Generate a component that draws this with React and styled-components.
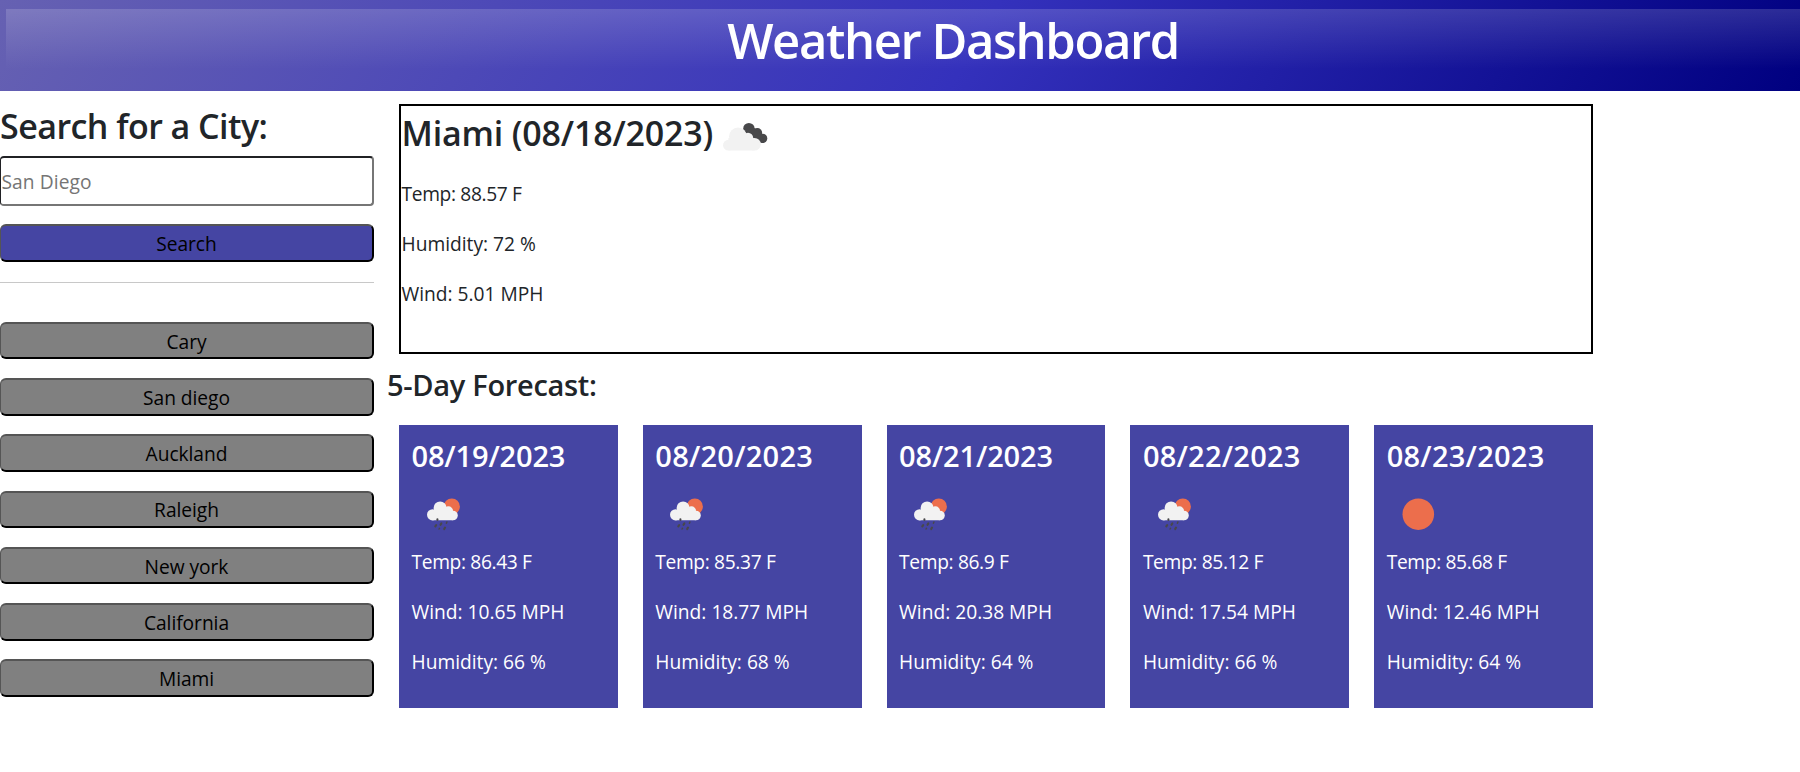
import React from "react";
import styled, { createGlobalStyle } from "styled-components";

const Global = createGlobalStyle`
  *, *::before, *::after { box-sizing: border-box; }
  body {
    margin: 0;
    background: #fff;
    color: #212529;
    font: 400 19.2px/30px "Open Sans", "Noto Sans", sans-serif;
    overflow: hidden;
  }
  h1, h2, h3, h4, p { margin: 0; }
`;

const Header = styled.header`
  height: 91px;
  padding: 9px 0 0 6px;
  background: linear-gradient(120deg, #6661b2 0%, #3431bc 54%, #000080 100%);
`;

const Gloss = styled.div`
  height: 60px;
  background: linear-gradient(to bottom, rgba(255, 255, 255, 0.16), rgba(255, 255, 255, 0));
`;

const Title = styled.h1`
  padding-left: 100px;
  text-align: center;
  color: #fff;
  font-weight: 600;
  font-size: 49px;
  letter-spacing: -1.4px;
  line-height: 62px;
`;

const Page = styled.main`
  display: grid;
  grid-template-columns: 374px 1206px;
  column-gap: 13px;
`;

const Sidebar = styled.aside`
  display: flex;
  flex-direction: column;
  padding-top: 14px;
`;

const SidebarTitle = styled.h2`
  font-weight: 600;
  font-size: 34px;
  letter-spacing: -0.54px;
  line-height: 42px;
  margin-bottom: 9px;
  white-space: nowrap;
`;

const CityInput = styled.input`
  height: 50px;
  padding: 1px 0 1px 0.5px;
  border: 2px solid;
  border-color: #202124 #767676 #767676 #202124;
  border-left-width: 1px;
  border-radius: 4px;
  font: inherit;
  letter-spacing: 0.08px;
  margin-bottom: 18px;
  &::placeholder { color: #757575; }
`;

const Button = styled.button`
  height: 37.5px;
  padding: 2px 0 0;
  border: 2px solid;
  border-color: #555 #000 #000 #555;
  border-left-width: 1px;
  border-radius: 6px;
  background: ${(p) => (p.$primary ? "#4545a3" : "#808080")};
  color: #000;
  font: inherit;
  letter-spacing: -0.05px;
`;

const Rule = styled.hr`
  width: 100%;
  height: 1px;
  margin: 20.5px 0 38.9px;
  border: 0;
  background: #c8c8c8;
`;

const History = styled.div`
  display: flex;
  flex-direction: column;
  gap: 18.75px;
`;

const Content = styled.section`
  padding-top: 13px;
`;

const Current = styled.section`
  height: 250px;
  margin-left: 12px;
  padding-left: 0.5px;
  border: 2px solid #000;
`;

const CurrentTitle = styled.h3`
  display: flex;
  align-items: flex-start;
  gap: 1.5px;
  height: 72.5px;
  font-weight: 600;
  font-size: 34px;
  letter-spacing: -0.18px;
  line-height: 54.5px;
`;

const Reading = styled.p`
  height: 30px;
  margin-bottom: 20px;
  letter-spacing: ${(p) => (p.$tight ? "-0.35px" : "normal")};
`;

const ForecastTitle = styled.h3`
  font-weight: 600;
  font-size: 29px;
  letter-spacing: -0.3px;
  line-height: 36px;
  margin: 12.5px 0 22.5px;
`;

const Cards = styled.div`
  display: grid;
  grid-template-columns: repeat(5, 1fr);
  gap: 25px;
  margin-left: 12px;
`;

const Card = styled.article`
  height: 283px;
  padding: 12.5px;
  background: #4545a3;
  color: #fff;
`;

const CardDate = styled.h4`
  font-weight: 600;
  font-size: 29px;
  letter-spacing: ${(p) => (p.$wide ? "0.25px" : "-0.15px")};
  line-height: 36px;
`;

const Icon = styled.svg`
  display: block;
  flex: none;
  width: 62.5px;
  height: 62.5px;
`;

const CardIcon = styled(Icon)`
  margin: 9.5px 0 1.5px;
`;

const TitleIcon = styled(Icon)`
  margin: 3.5px 0 0;
`;

function BrokenClouds() {
  return (
    <TitleIcon viewBox="0 0 62.5 62.5">
      <g fill="#48484a">
        <circle cx="33.9" cy="18.6" r="5.7" />
        <circle cx="42.3" cy="23" r="4.9" />
        <circle cx="47.6" cy="28.4" r="4.7" />
        <path d="M31 22l7-5 9 7 2 9-6-1-7-6z" />
      </g>
      <g fill="#f2f2f2">
        <circle cx="13.4" cy="35.2" r="5.4" />
        <circle cx="23" cy="26.5" r="9" />
        <circle cx="33" cy="28" r="5.2" />
        <circle cx="39.5" cy="34.3" r="6.3" />
        <path d="M13.4 28h24l2.1 12.6H13.4z" />
      </g>
    </TitleIcon>
  );
}

function RainWithSun() {
  return (
    <CardIcon viewBox="0 0 62.5 62.5">
      <circle cx="39.8" cy="23.5" r="8.1" fill="#ec6e4c" />
      <g fill="#f2f2f2">
        <circle cx="20.6" cy="31.8" r="5.6" />
        <circle cx="28.1" cy="24.9" r="6.5" />
        <circle cx="36.4" cy="27.9" r="4.6" />
        <circle cx="41" cy="32.5" r="4.8" />
        <path d="M20.6 27h18l2.4 10.3H20.6z" />
      </g>
      <g stroke="#48484a" strokeWidth="2.1" strokeLinecap="round">
        <path d="M25.4 36.4v.6" />
        <path d="M29.3 40.4l-.8 1.4" />
        <path d="M34.9 39l-.5 1.2" strokeWidth="1.5" />
        <path d="M24.2 42.1l-.9 1.3" />
        <path d="M33 44.6l-.8 1.5" />
        <path d="M27.5 45.3l-.4.7" strokeWidth="1.5" />
      </g>
    </CardIcon>
  );
}

function ClearSky() {
  return (
    <CardIcon viewBox="0 0 62.5 62.5">
      <circle cx="31.3" cy="31.2" r="15.8" fill="#ec6e4c" />
    </CardIcon>
  );
}

const cities = ["Cary", "San diego", "Auckland", "Raleigh", "New york", "California", "Miami"];

const days = [
  { date: "08/19/2023", temp: 86.43, wind: 10.65, humidity: 66, Sky: RainWithSun },
  { date: "08/20/2023", temp: 85.37, wind: 18.77, humidity: 68, Sky: RainWithSun },
  { date: "08/21/2023", temp: 86.9, wind: 20.38, humidity: 64, Sky: RainWithSun },
  { date: "08/22/2023", temp: 85.12, wind: 17.54, humidity: 66, Sky: RainWithSun },
  { date: "08/23/2023", temp: 85.68, wind: 12.46, humidity: 64, Sky: ClearSky },
];

export default function App() {
  return (
    <>
      <Global />
      <Header>
        <Gloss>
          <Title>Weather Dashboard</Title>
        </Gloss>
      </Header>
      <Page>
        <Sidebar>
          <SidebarTitle>Search for a City:</SidebarTitle>
          <CityInput placeholder="San Diego" />
          <Button $primary>Search</Button>
          <Rule />
          <History>
            {cities.map((city) => (
              <Button key={city}>{city}</Button>
            ))}
          </History>
        </Sidebar>
        <Content>
          <Current>
            <CurrentTitle>
              Miami (08/18/2023)
              <BrokenClouds />
            </CurrentTitle>
            <Reading $tight>Temp: 88.57 F</Reading>
            <Reading>Humidity: 72 %</Reading>
            <Reading>Wind: 5.01 MPH</Reading>
          </Current>
          <ForecastTitle>5-Day Forecast:</ForecastTitle>
          <Cards>
            {days.map(({ date, temp, wind, humidity, Sky }) => (
              <Card key={date}>
                <CardDate $wide={!date.includes("1")}>{date}</CardDate>
                <Sky />
                <Reading $tight>Temp: {temp} F</Reading>
                <Reading>Wind: {wind} MPH</Reading>
                <Reading>Humidity: {humidity} %</Reading>
              </Card>
            ))}
          </Cards>
        </Content>
      </Page>
    </>
  );
}
